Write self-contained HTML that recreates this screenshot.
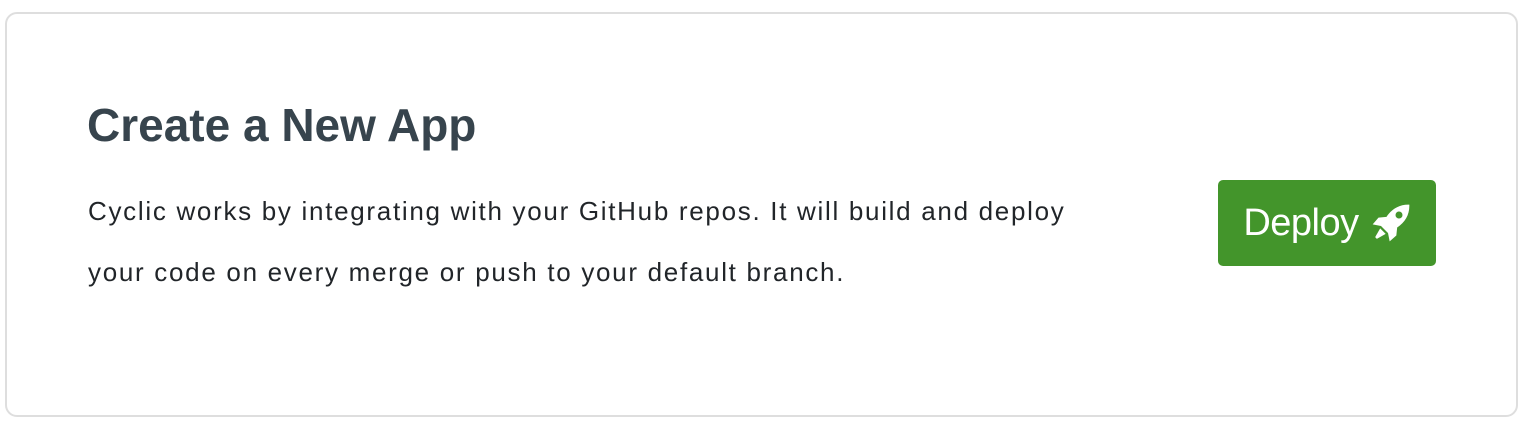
<!DOCTYPE html>
<html><head><style>
body{margin:0;width:1524px;height:432px;background:#fff;font-family:"Liberation Sans",sans-serif;position:relative;overflow:hidden}
.card{position:absolute;left:5px;top:12px;width:1509px;height:401px;border:2px solid #dedede;border-radius:12px}
h1{position:absolute;left:87px;top:99px;margin:0;font-size:46px;font-weight:bold;color:#37444d;line-height:52px}
p{position:absolute;left:88px;top:181px;margin:0;font-size:26px;letter-spacing:1.7px;color:#212529;line-height:61px;width:1100px;white-space:nowrap}
.btn{position:absolute;left:1218px;top:180px;width:218px;height:86px;background:#43952b;border-radius:5px;color:#fff;font-size:38px;display:flex;align-items:center;justify-content:center;gap:12px}
</style></head><body>
<div class="card"></div>
<h1>Create a New App</h1>
<p>Cyclic works by integrating with your GitHub repos. It will build and deploy<br>your code on every merge or push to your default branch.</p>
<div class="btn"><span style="letter-spacing:-0.5px">Deploy</span>
<svg width="40" height="40" viewBox="0 0 24 24"><path fill="#fff" d="M23 1C17 0.8 12.5 3.5 9.3 8.3L4.5 8.8 1 12.8 6 13.8 10.2 18 11.2 23 15.2 19.5 15.7 14.7C20.5 11.5 23.2 7 23 1Z"/><circle cx="16.8" cy="7.2" r="2.1" fill="#43952b"/><path fill="#fff" d="M5.5 15.2 8.8 18.5 3.5 21.5 2.5 20.5Z"/></svg></div>
</body></html>
